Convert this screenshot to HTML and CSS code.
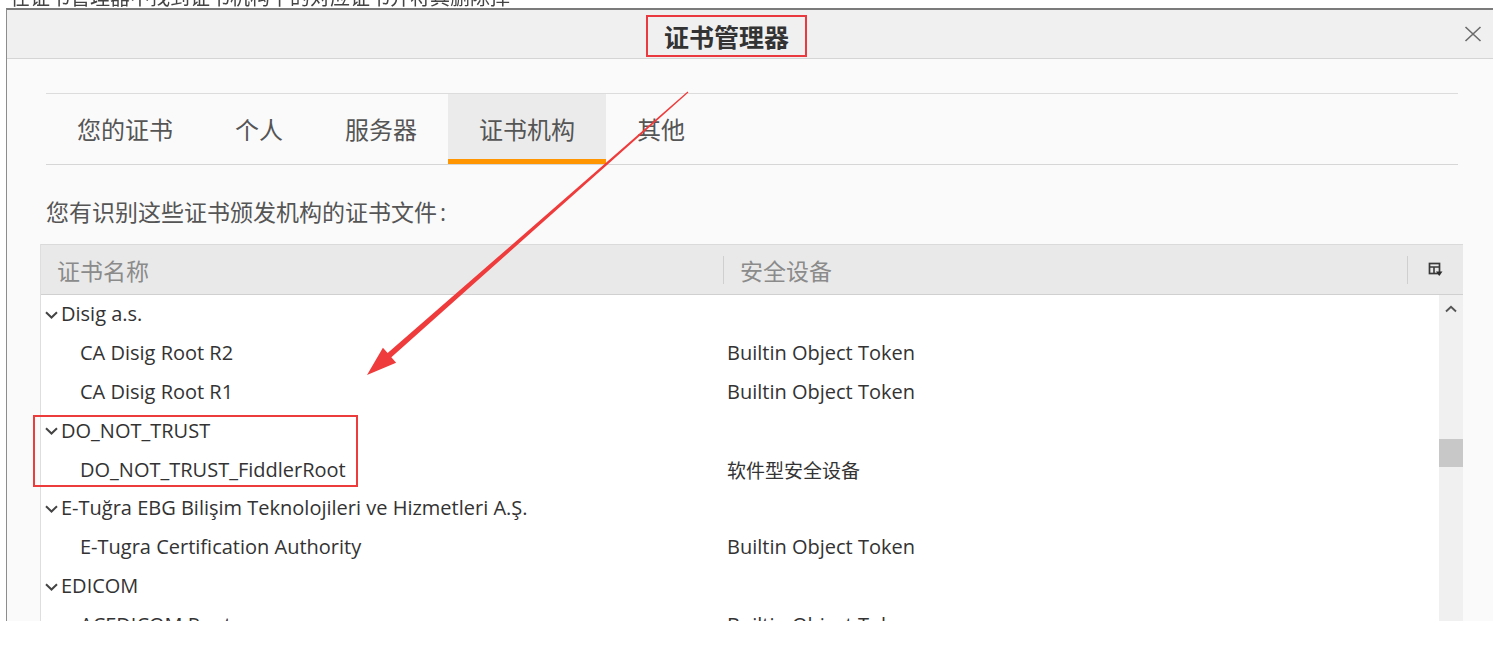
FILE: index.html
```html
<!DOCTYPE html>
<html lang="zh-CN">
<head>
<meta charset="utf-8">
<title>证书管理器</title>
<link rel="stylesheet" href="styles.css">
</head>
<body>
<div class="bgline"><span>在证书管理器中找到证书机构下的对应证书并将其删除掉</span></div>
<div class="dialog">
  <div class="titlebar">
    <div class="title">证书管理器</div>
    <div class="close">
      <svg width="18" height="16" viewBox="0 0 18 16"><path d="M1.5 1 L16.5 15 M16.5 1 L1.5 15" stroke="#6b6b6b" stroke-width="1.6" fill="none"/></svg>
    </div>
  </div>
  <div class="content">
    <div class="tabs">
      <div class="tab">您的证书</div>
      <div class="tab">个人</div>
      <div class="tab">服务器</div>
      <div class="tab active">证书机构</div>
      <div class="tab">其他</div>
    </div>
    <div class="desc">您有识别这些证书颁发机构的证书文件<span class="colon">:</span></div>
    <div class="table">
      <div class="thead">
        <div class="th th-name">证书名称</div>
        <div class="th th-dev">安全设备</div>
        <div class="th th-icon">
          <svg width="15" height="15" viewBox="0 0 15 15"><rect x="1.5" y="1.5" width="10" height="10" fill="none" stroke="#3a3a3a" stroke-width="1.7"/><path d="M1.5 5 H11.5 M6 5 V11.5" stroke="#3a3a3a" stroke-width="1.6"/><path d="M8 9.5 H14.5 L11.25 14 Z" fill="#2e2e2e"/></svg>
        </div>
      </div>
      <div class="tbody">
        <div class="rows">
          <div class="row group"><div class="c1"><svg class="chev" width="13" height="8" viewBox="0 0 13 8"><path d="M1 1.2 L6.5 6.5 L12 1.2" fill="none" stroke="#444" stroke-width="2"/></svg>Disig a.s.</div><div class="c2"></div></div>
          <div class="row child"><div class="c1">CA Disig Root R2</div><div class="c2">Builtin Object Token</div></div>
          <div class="row child"><div class="c1">CA Disig Root R1</div><div class="c2">Builtin Object Token</div></div>
          <div class="row group"><div class="c1"><svg class="chev" width="13" height="8" viewBox="0 0 13 8"><path d="M1 1.2 L6.5 6.5 L12 1.2" fill="none" stroke="#444" stroke-width="2"/></svg>DO_NOT_TRUST</div><div class="c2"></div></div>
          <div class="row child"><div class="c1">DO_NOT_TRUST_FiddlerRoot</div><div class="c2 cjk">软件型安全设备</div></div>
          <div class="row group"><div class="c1"><svg class="chev" width="13" height="8" viewBox="0 0 13 8"><path d="M1 1.2 L6.5 6.5 L12 1.2" fill="none" stroke="#444" stroke-width="2"/></svg>E-Tuğra EBG Bilişim Teknolojileri ve Hizmetleri A.Ş.</div><div class="c2"></div></div>
          <div class="row child"><div class="c1">E-Tugra Certification Authority</div><div class="c2">Builtin Object Token</div></div>
          <div class="row group"><div class="c1"><svg class="chev" width="13" height="8" viewBox="0 0 13 8"><path d="M1 1.2 L6.5 6.5 L12 1.2" fill="none" stroke="#444" stroke-width="2"/></svg>EDICOM</div><div class="c2"></div></div>
          <div class="row child"><div class="c1">ACEDICOM Root</div><div class="c2">Builtin Object Token</div></div>
        </div>
        <div class="scrollbar">
          <svg class="up" width="12" height="8" viewBox="0 0 12 8"><path d="M1 6.5 L6 1.8 L11 6.5" fill="none" stroke="#555" stroke-width="1.9"/></svg>
          <div class="thumb"></div>
        </div>
      </div>
    </div>
  </div>
</div>
<div class="annot-box"></div>
<svg class="arrow" width="1501" height="649" viewBox="0 0 1501 649">
  <polygon points="688.4,92.45 391.35,357.3 396.1,362.7 367,375 382.9,347.7 387.65,353.1 687.6,91.55" fill="#ef3b3b"/>
</svg>
</body>
</html>
```

FILE: styles.css
```css
body {
  margin: 0;
  width: 1501px;
  height: 649px;
  overflow: hidden;
  background: #ffffff;
  position: relative;
  font-family: "Noto Sans CJK SC", "Open Sans", sans-serif;
}

.bgline {
  height: 8px;
  overflow: hidden;
  padding-left: 10px;
}

.bgline span {
  display: block;
  font-size: 20px;
  line-height: 20px;
  margin-top: -13px;
  color: #444;
  white-space: nowrap;
  filter: blur(0.7px);
}

.dialog {
  margin-left: 6px;
  width: 1487px;
  height: 613px;
  box-sizing: border-box;
  border-top: 2px solid #7b7b7b;
  border-left: 1px solid #8d8d8d;
  background: #fafafa;
  overflow: hidden;
}

.titlebar {
  height: 48px;
  background: #f0f0f0;
  border-bottom: 1px solid #d5d5d5;
  display: flex;
}

.title {
  margin-top: 5px;
  margin-left: 639px;
  height: 42px;
  box-sizing: border-box;
  border: 2px solid #ea3a3f;
  padding: 0 16px;
  line-height: 38px;
  font-size: 25px;
  font-weight: bold;
  color: #333;
}

.close {
  margin-left: auto;
  margin-right: 11px;
  align-self: center;
  display: flex;
}

.content {
  padding: 34px 0 0 33px;
}

.tabs {
  margin-left: 6px;
  width: 1412px;
  border-top: 1px solid #dcdcdc;
  border-bottom: 1px solid #d6d6d6;
  display: flex;
}

.tab {
  padding: 0 31px;
  font-size: 24px;
  line-height: 70px;
  color: #555;
}

.tab.active {
  background: #ebebeb;
  box-shadow: inset 0 -5px 0 #ff9500;
}

.desc {
  margin: 31px 0 0 6px;
  font-size: 23px;
  line-height: 30px;
  color: #555;
}

.colon {
  font-family: "Open Sans", sans-serif;
  margin-left: 3px;
}

.table {
  margin-top: 17px;
  width: 1422px;
  border-left: 1px solid #dedede;
}

.thead {
  display: flex;
  align-items: center;
  height: 49px;
  border-top: 1px solid #dadada;
  border-bottom: 1px solid #d0d0d0;
  background: #e9e9e9;
}

.th {
  font-size: 23px;
  color: #8b8b8b;
  box-sizing: border-box;
}

.th-name {
  width: 682px;
  padding-left: 16px;
}

.th-dev {
  width: 684px;
  padding-left: 16px;
  border-left: 1px solid #cfcfcf;
  height: 28px;
  line-height: 28px;
}

.th-icon {
  flex: 1;
  height: 28px;
  border-left: 1px solid #cfcfcf;
  display: flex;
  align-items: center;
  justify-content: center;
}

.tbody {
  display: flex;
  height: 400px;
}

.rows {
  flex: 1;
  background: #ffffff;
}

.row {
  display: grid;
  grid-template-columns: 686px 1fr;
  height: 38.9px;
  line-height: 38.9px;
  font-family: "Open Sans", "Noto Sans CJK SC", sans-serif;
  font-size: 20px;
  color: #333;
  white-space: nowrap;
}

.row .c1 {
  padding-left: 4px;
}

.row.child .c1 {
  padding-left: 39px;
}

.chev {
  vertical-align: middle;
  margin-right: 3px;
  position: relative;
  top: -1px;
}

.c2.cjk {
  font-family: "Noto Sans CJK SC", sans-serif;
  font-size: 19px;
}

.scrollbar {
  width: 24px;
  background: #f0f0f0;
  display: flex;
  flex-direction: column;
  align-items: center;
}

.up {
  margin-top: 10px;
}

.thumb {
  margin-top: 126px;
  align-self: stretch;
  height: 28px;
  background: #c8c8c8;
}

.annot-box {
  position: absolute;
  left: 33px;
  top: 415px;
  width: 325px;
  height: 72px;
  box-sizing: border-box;
  border: 2px solid #ec3c3c;
}

.arrow {
  position: absolute;
  left: 0;
  top: 0;
  pointer-events: none;
}
```
